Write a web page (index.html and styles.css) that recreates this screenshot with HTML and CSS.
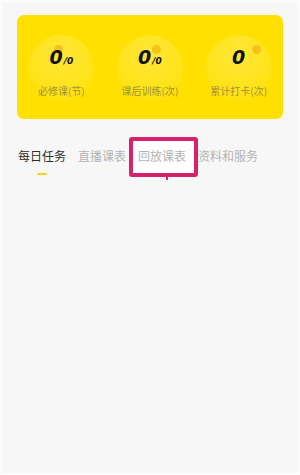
FILE: index.html
```html
<!DOCTYPE html>
<html lang="zh-CN">
<head>
<meta charset="utf-8">
<title>学习</title>
<link rel="stylesheet" href="styles.css">
</head>
<body>
<div class="page">
  <section class="card">
    <div class="stat stat--a">
      <span class="dot"></span>
      <div class="num"><span class="big">0</span><span class="small">/0</span></div>
      <div class="label">必修课(节)</div>
    </div>
    <div class="stat stat--b">
      <span class="dot"></span>
      <div class="num"><span class="big">0</span><span class="small">/0</span></div>
      <div class="label">课后训练(次)</div>
    </div>
    <div class="stat stat--c">
      <span class="dot"></span>
      <div class="num"><span class="big">0</span></div>
      <div class="label">累计打卡(次)</div>
    </div>
  </section>
  <nav class="tabs">
    <div class="tab tab--active"><span class="tab-text">每日任务</span></div>
    <div class="tab"><span class="tab-text">直播课表</span></div>
    <div class="tab tab--marked"><span class="tab-text">回放课表</span></div>
    <div class="tab"><span class="tab-text">资料和服务</span></div>
  </nav>
</div>
</body>
</html>
```
FILE: styles.css
```css
* { box-sizing: border-box; }
html, body { margin: 0; padding: 0; background: #ffffff; }
body { font-family: "Noto Sans CJK SC", "Noto Sans", sans-serif; }

.page {
  width: 300px;
  height: 475px;
  border: 2px solid #fdfdfd;
  background: #f7f7f7;
  padding: 13px 15px 0;
  overflow: hidden;
}

.card {
  height: 104px;
  border-radius: 7px;
  background: #ffe000;
  padding: 20px 0 19px;
  display: grid;
  grid-template-columns: repeat(3, 1fr);
  justify-items: center;
}

.stat {
  position: relative;
  width: 66px;
  height: 66px;
  border-radius: 50%;
  background: radial-gradient(circle at 50% 30%, rgba(255,255,255,0.22), rgba(255,255,255,0.10) 60%, rgba(255,255,255,0) 100%);
  padding-top: 11px;
  display: flex;
  flex-direction: column;
  align-items: center;
}

.dot {
  position: absolute;
  top: 10px;
  width: 9px;
  height: 9px;
  border-radius: 50%;
  background: #f5b914;
  opacity: 0.8;
}
.stat--a .dot { left: 26px; }
.stat--b .dot { left: 35px; }
.stat--c .dot { left: 46px; }

.num {
  position: relative;
  height: 22px;
  line-height: 22px;
  font-family: "DejaVu Sans", "Liberation Sans", sans-serif;
  font-weight: bold;
  font-style: italic;
  color: #111;
  white-space: nowrap;
}
.big { font-size: 19px; }
.small { font-size: 9px; margin-left: 1px; }

.label {
  margin-top: 16px;
  font-size: 10px;
  line-height: 14px;
  color: #a08f3c;
  white-space: nowrap;
}

.tabs {
  margin: 28px 0 0 1px;
  display: flex;
  align-items: flex-start;
  gap: 12px;
}

.tab {
  position: relative;
  display: flex;
  flex-direction: column;
  align-items: center;
  font-size: 12px;
  line-height: 17px;
  color: #b4b4b4;
  white-space: nowrap;
}
.tab-text { position: relative; }

.tab--active { color: #2e2e2e; }
.tab--active::after {
  content: "";
  display: block;
  width: 10px;
  height: 2px;
  margin-top: 9px;
  background: #f3d31c;
  border-radius: 1px;
}

.tab--marked::before {
  content: "";
  position: absolute;
  left: -9px;
  right: -12px;
  top: -10px;
  bottom: -13px;
  border: 4px solid #d6226b;
  border-radius: 3px;
  background: #fefefe;
}
.tab--marked::after {
  content: "";
  position: absolute;
  left: 28px;
  bottom: -16px;
  width: 2px;
  height: 3px;
  background: #d6226b;
}
```
